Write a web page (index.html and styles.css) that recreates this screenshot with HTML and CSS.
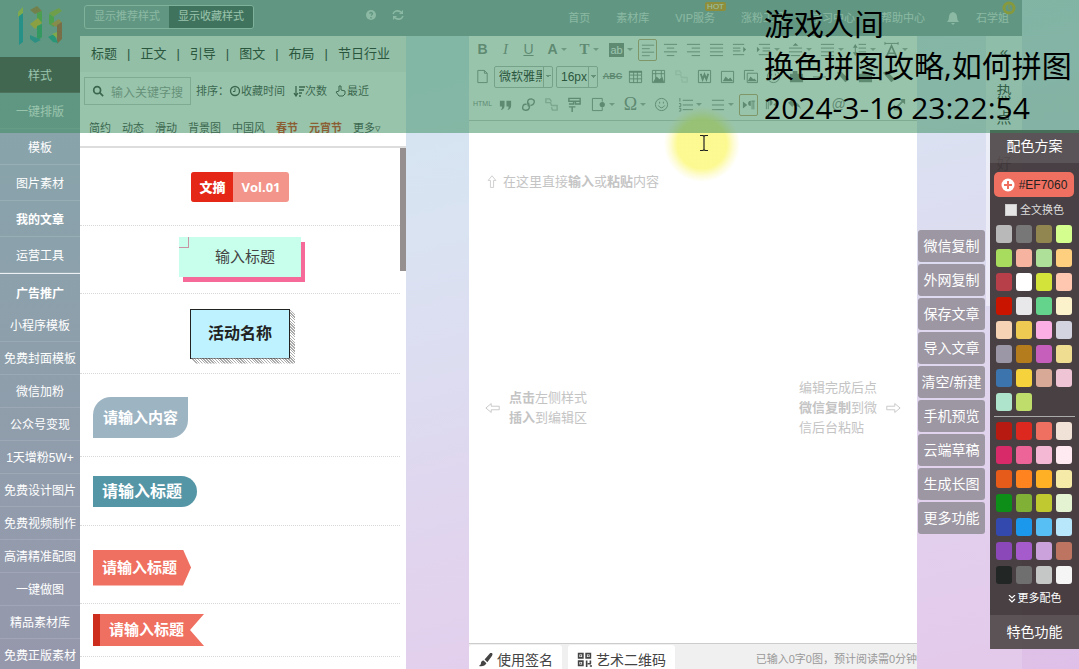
FILE: index.html
```html
<!DOCTYPE html>
<html lang="zh-CN">
<head>
<meta charset="utf-8">
<meta name="viewport" content="width=device-width, initial-scale=1">
<title>135编辑器</title>
<link rel="stylesheet" href="styles.css">
</head>
<body>
<svg class="defs" aria-hidden="true">
  <symbol id="left" viewBox="0 0 16 16"><path d="M1 2.500h14M1 6.500h9M1 10.500h14M1 14.500h9"/></symbol>
  <symbol id="center" viewBox="0 0 16 16"><path d="M1 2.500h14M4 6.500h8M1 10.500h14M4 14.500h8"/></symbol>
  <symbol id="right" viewBox="0 0 16 16"><path d="M1 2.500h14M6 6.500h9M1 10.500h14M6 14.500h9"/></symbol>
  <symbol id="justify" viewBox="0 0 16 16"><path d="M1 2.500h14M1 6.500h14M1 10.500h14M1 14.500h14"/></symbol>
  <symbol id="indent" viewBox="0 0 16 16"><path d="M1 2.500h12M1 6.500h8M1 9.500h8M1 13.500h12"/><path class="solid" d="M12 5l3 3-3 3z"/></symbol>
  <symbol id="outdent" viewBox="0 0 16 16"><path d="M3 2.500h12M7 6.500h8M7 9.500h8M3 13.500h12"/><path class="solid" d="M1 5l3 3-3 3z"/></symbol>
  <symbol id="space" viewBox="0 0 16 16"><path d="M1 6.500h14M1 10.500h14M3 14.500h10"/><path class="solid" d="M5 4l3-3 3 3z"/></symbol>
  <symbol id="lineh" viewBox="0 0 16 16"><path d="M7 2.500h8M7 6.500h8M7 10.500h8M7 14.500h8M3.500 4v9"/><path class="solid" d="M1 6l2.500-4L6 6zM1 11l2.500 4L6 11z"/></symbol>
  <symbol id="spacing" viewBox="0 0 16 16"><path d="M1 1.500h14M1 0v3M15 0v3"/><path stroke-width="1.800" d="M3 15L8 4l5 11M5 12h6"/></symbol>
  <symbol id="page" viewBox="0 0 16 16"><path d="M3 1.500h7l3 3v10H3zM10 1.500v3h3"/></symbol>
  <symbol id="table" viewBox="0 0 16 16"><path d="M1.500 2.500h13v12h-13zM1.500 6.500h13M1.500 10.500h13M6 3v12M10 3v12"/><path class="solid" d="M1 2h14v2H1z"/></symbol>
  <symbol id="image" viewBox="0 0 16 16"><path d="M1.500 2.500h13v12h-13z"/><path class="solid" d="M3 13l3-5 3 3 2-2 3 4z"/></symbol>
  <symbol id="grid" viewBox="0 0 16 16"><path d="M1.500 1.500h13v13h-13zM2 5h12M5 2v12M11 2v7"/><path class="solid" d="M2 14l4-6 3 3 3-3 2 6z"/></symbol>
  <symbol id="images" viewBox="0 0 16 16"><path d="M1.500 11.500v-10h10M4.500 4.500h11v10h-11z"/><path class="solid" d="M5 13l3-5 3 3 1-1 3 3z"/></symbol>
  <symbol id="word" viewBox="0 0 16 16"><path d="M1.500 1.500h13v13h-13z"/><path stroke-width="2" d="M4 5l2 6 2-5 2 5 2-6"/></symbol>
  <symbol id="quote" viewBox="0 0 16 16"><path class="solid" d="M2 4h5v5q0 4-4 5 2-3 1-4H2zM9 4h5v5q0 4-4 5 2-3 1-4H9z"/></symbol>
  <symbol id="link" viewBox="0 0 16 16"><path stroke-width="1.500" d="M8 10L7 6q0-4 4-4 4 1 3 4-1 3-4 3M8 6l1 5q-1 4-5 3-3-1-2-4 1-3 4-2"/></symbol>
  <symbol id="unlink" viewBox="0 0 16 16"><path stroke-width="1.500" d="M8 5L6 2H2v4h5l1 3h6v5H9l-1-3"/></symbol>
  <symbol id="brush" viewBox="0 0 16 16"><path stroke-width="1.500" d="M2 1.500h12v3H2zM2 7.500h5V5M9 5v2.500h5V5M2 10.500h7M5.500 11v5"/></symbol>
  <symbol id="insert" viewBox="0 0 16 16"><path d="M12 5V1.500H1.500v13H12V11"/><circle class="solid" cx="12" cy="8" r="2.800"/></symbol>
  <symbol id="smile" viewBox="0 0 16 16"><circle cx="8" cy="8" r="6.500"/><path d="M4.500 9q3.500 5 7 0M6 5v2M10 5v2"/></symbol>
  <symbol id="ol" viewBox="0 0 16 16"><path d="M5 3.500h11M5 8.500h11M5 13.500h11M2 1v4M1 7h2v3H1M1 12h2v3H1"/></symbol>
  <symbol id="ul" viewBox="0 0 16 16"><path d="M2 3.500h13M2 8.500h13M2 13.500h13"/></symbol>
  <symbol id="para" viewBox="0 0 16 16"><path class="solid" d="M1 4l5 4-5 4zM11 3h4v1H11zM10 3v6a3 3 0 0 1 0-6z"/><path d="M11.500 3v10M13.500 3v10"/></symbol>
  <symbol id="undo" viewBox="0 0 16 16"><path class="solid" d="M1 6l5-4v3q7 0 9 8-3-4-9-4v2z"/></symbol>
  <symbol id="expand" viewBox="0 0 16 16"><path d="M3 13L13 3" stroke-width="2"/><path class="solid" d="M8 2h6v6zM2 8v6h6z"/></symbol>
  <symbol id="eraser" viewBox="0 0 16 16"><path class="solid" d="M2 4l4-2 9 9-4 3z"/></symbol>
  <symbol id="camera" viewBox="0 0 16 16"><path class="solid" d="M1 5h14v9H1zM4 2h5v3H4z"/></symbol>
  <symbol id="dash" viewBox="0 0 16 16"><path d="M1 8.500h14"/></symbol>
  <symbol id="arrow" viewBox="0 0 18 14"><path d="M1 7l6-5v3h9v4H7v3z"/></symbol>
</svg>

<div class="app">
  <aside class="side">
    <a class="logo" href="#" aria-label="135">
      <svg viewBox="0 0 48 40"><path fill="#1798b4" d="M3 9l4-2v29l-4 3z"/><path fill="#c9c93e" d="M2 6l5-5v6l-5 4z"/><path fill="#b0793c" d="M14 4l7-4 5 5-7 3z"/><path fill="#66b447" d="M21 7l5-2v12l-5 3z"/><path fill="#e1b72d" d="M14 18l8-6 4 5-7 6z"/><path fill="#35a867" d="M21 20l5-2v13l-5 4z"/><path fill="#2697ac" d="M14 29l7 3 4 2-6 3-5-4z"/><path fill="#aab23c" d="M33 7l10-5 3 3-9 6z"/><path fill="#67b842" d="M33 8l5 3v10l-5-3z"/><path fill="#d8913b" d="M35 18l8-5 3 4-6 4z"/><path fill="#bd5438" d="M41 19l5-3v17l-5 5z"/><path fill="#20a396" d="M32 31l6-3 4 9-5-1z"/><path fill="#c9c93e" d="M36 28l5-2v6z"/></svg>
    </a>
    <nav class="menu">
      <a class="on" href="#">样式</a><a href="#">一键排版</a><a href="#">模板</a><a href="#">图片素材</a><a class="strong" href="#">我的文章</a><a href="#">运营工具</a>
    </nav>
    <nav class="menu promo">
      <a class="strong" href="#">广告推广</a><a href="#">小程序模板</a><a href="#">免费封面模板</a><a href="#">微信加粉</a><a href="#">公众号变现</a><a href="#">1天增粉5W+</a><a href="#">免费设计图片</a><a href="#">免费视频制作</a><a href="#">高清精准配图</a><a href="#">一键做图</a><a href="#">精品素材库</a><a href="#">免费正版素材</a>
    </nav>
  </aside>

  <div class="work">
    <header class="top">
      <div class="toggle"><button>显示推荐样式</button><button class="on">显示收藏样式</button></div>
      <div class="tools">
        <button aria-label="帮助"><svg viewBox="0 0 12 12"><circle cx="6" cy="6" r="5" fill="currentColor"/><path d="M4.500 4.500q1.500-2 3 0 0 1-1.500 2M6 8v1.500" fill="none" stroke="#8da3ab" stroke-width="1.300"/></svg></button>
        <button aria-label="刷新"><svg viewBox="0 0 12 12"><path d="M1 5q2-5 8-2M11 7q-2 5-8 2" fill="none" stroke="currentColor" stroke-width="1.600"/><path d="M11 1v4H7zM1 11V7h4z" fill="currentColor"/></svg></button>
      </div>
      <nav class="nav">
        <a href="#">首页</a><a href="#">素材库</a><a class="vip" href="#">VIP服务<span class="hot">HOT</span></a><a href="#">涨粉工具</a><a href="#">学习中心</a><a href="#">帮助中心</a>
        <a class="bell" href="#" aria-label="消息"><svg viewBox="0 0 12 14"><path fill="currentColor" d="M6 1q4 1 4 5 0 3 2 5H0q2-2 2-5 0-4 4-5zM4 12h4l-2 2z"/></svg></a>
        <a class="user" href="#">石学姐<svg class="medal" viewBox="0 0 14 16"><circle cx="7" cy="8" r="5" fill="none" stroke="#dba820" stroke-width="3"/><path d="M7 5v4h2" fill="none" stroke="#dba820"/></svg></a>
      </nav>
    </header>

    <div class="cols">
      <section class="library">
        <nav class="cats"><a href="#">标题</a><i>|</i><a href="#">正文</a><i>|</i><a href="#">引导</a><i>|</i><a href="#">图文</a><i>|</i><a href="#">布局</a><i>|</i><a href="#">节日行业</a></nav>
        <div class="filter">
          <label class="search"><svg viewBox="0 0 14 14"><circle cx="6" cy="6" r="4" fill="none" stroke="currentColor" stroke-width="2"/><path d="M9 9l4 4" stroke="currentColor" stroke-width="2"/></svg><input type="text" aria-label="搜索" placeholder="输入关键字搜索"></label>
          <span>排序：</span>
          <a href="#"><svg viewBox="0 0 12 12"><circle cx="6" cy="6" r="4.500" fill="none" stroke="currentColor" stroke-width="1.300"/><path d="M6 3v3.500H4" fill="none" stroke="currentColor"/></svg>收藏时间</a>
          <a class="next" href="#"><svg viewBox="0 0 12 12"><path d="M3 1v9M1 8l2 3 2-3M6 2h6M6 5h5M6 8h3M6 11h2" fill="none" stroke="currentColor" stroke-width="1.300"/></svg>次数</a>
          <a class="next" href="#"><svg viewBox="0 0 12 12"><path d="M4 6V1h2v4l4 1v3l-2 2H4L1 7z" fill="none" stroke="currentColor"/></svg>最近</a>
        </div>
        <nav class="tags"><a href="#">简约</a><a href="#">动态</a><a href="#">滑动</a><a href="#">背景图</a><a href="#">中国风</a><a class="festive" href="#">春节</a><a class="festive" href="#">元宵节</a><a href="#">更多▿</a></nav>
        <div class="list">
          <ul class="styles">
            <li class="mid h78"><div class="vol"><b>文摘</b><span>Vol.01</span></div></li>
            <li class="mid h68"><div class="mint">输入标题</div></li>
            <li class="mid h79"><div class="boxed">活动名称</div></li>
            <li class="h83"><div class="leaf">请输入内容</div></li>
            <li class="h69"><div class="pill">请输入标题</div></li>
            <li class="h78"><div class="tagshape">请输入标题</div></li>
            <li class="h53"><div class="ribbon">请输入标题</div></li>
          </ul>
          <div class="bar"></div>
        </div>
      </section>

      <main class="editor">
        <div class="toolbar">
          <div class="row">
            <button class="b">B</button><button class="i">I</button><button class="u">U</button><button class="b drop">A</button><button class="t drop">T</button><button class="ab drop"><span>ab</span></button>
            <button class="sel" aria-label="左对齐"><svg><use href="#left"/></svg></button><button aria-label="居中"><svg><use href="#center"/></svg></button><button aria-label="右对齐"><svg><use href="#right"/></svg></button><button aria-label="两端对齐"><svg><use href="#justify"/></svg></button><button aria-label="缩进"><svg><use href="#indent"/></svg></button><button class="drop" aria-label="边距"><svg><use href="#outdent"/></svg></button><button class="drop" aria-label="段前距"><svg><use href="#space"/></svg></button><button class="drop" aria-label="段后距"><svg><use href="#justify"/></svg></button><button class="drop" aria-label="行高"><svg><use href="#lineh"/></svg></button><button class="drop" aria-label="字间距"><svg><use href="#spacing"/></svg></button>
          </div>
          <div class="row">
            <button aria-label="新建"><svg><use href="#page"/></svg></button>
            <select class="font" aria-label="字体"><option>微软雅黑</option></select><select class="size" aria-label="字号"><option>16px</option></select>
            <button class="abc">ABC</button><button aria-label="表格"><svg><use href="#table"/></svg></button><button aria-label="背景"><svg><use href="#grid"/></svg></button><button class="dim" aria-label="合并"><svg><use href="#unlink"/></svg></button><button aria-label="Word"><svg><use href="#word"/></svg></button><button aria-label="图片"><svg><use href="#image"/></svg></button><button aria-label="多图"><svg><use href="#images"/></svg></button><button aria-label="音乐"><svg><use href="#smile"/></svg></button><button aria-label="视频"><svg><use href="#camera"/></svg></button><button aria-label="分隔线"><svg><use href="#dash"/></svg></button><button aria-label="清除"><svg><use href="#eraser"/></svg></button><button aria-label="截图"><svg><use href="#camera"/></svg></button><button aria-label="格式"><svg><use href="#eraser"/></svg></button>
          </div>
          <div class="row">
            <button class="html">HTML</button><button aria-label="引用"><svg><use href="#quote"/></svg></button><button aria-label="链接"><svg><use href="#link"/></svg></button><button class="faded" aria-label="取消链接"><svg><use href="#unlink"/></svg></button><button aria-label="格式刷"><svg><use href="#brush"/></svg></button><button class="drop" aria-label="插入"><svg><use href="#insert"/></svg></button><button class="omega drop">Ω</button><button aria-label="表情"><svg><use href="#smile"/></svg></button><button class="drop" aria-label="有序列表"><svg><use href="#ol"/></svg></button><button class="drop" aria-label="无序列表"><svg><use href="#ul"/></svg></button><button class="sel" aria-label="段落"><svg><use href="#para"/></svg></button><button aria-label="段落反向"><svg class="flip"><use href="#para"/></svg></button><button aria-label="撤销"><svg><use href="#undo"/></svg></button><button class="at">@</button><button class="last" aria-label="全屏"><svg><use href="#expand"/></svg></button>
          </div>
        </div>
        <div class="canvas">
          <p class="hint first"><svg class="up"><use href="#arrow"/></svg><span>在这里直接<b>输入</b>或<b>粘贴</b>内容</span></p>
          <div class="sides">
            <p class="hint"><svg><use href="#arrow"/></svg><span><b>点击</b>左侧样式<br><b>插入</b>到编辑区</span></p>
            <p class="hint"><span>编辑完成后点<br><b>微信复制</b>到微<br>信后台粘贴</span><svg class="flip"><use href="#arrow"/></svg></p>
          </div>
        </div>
        <footer class="foot">
          <button><svg viewBox="0 0 16 16"><path fill="currentColor" d="M15 1q1 1 0 3l-5 7-3-3 6-7zM6 9l3 3q-2 4-8 3l2-2q0-4 3-4z"/></svg>使用签名</button>
          <button><svg viewBox="0 0 14 14"><path fill="none" stroke="currentColor" stroke-width="1.500" d="M1.500 1.500h4v4h-4zM8.500 1.500h4v4h-4zM1.500 8.500h4v4h-4zM9 8v6M12.500 8v3M10 11h3M12 13h2M3 3.500h1M10 3.500h1M3 10.500h1"/></svg>艺术二维码</button>
          <span>已输入0字0图，预计阅读需0分钟</span>
        </footer>
      </main>

      <div class="actions">
        <button>微信复制</button><button>外网复制</button><button>保存文章</button><button>导入文章</button><button>清空/新建</button><button>手机预览</button><button>云端草稿</button><button>生成长图</button><button>更多功能</button>
      </div>
      <div class="strip"><span>«</span><span>热</span><span>点</span><span class="low">好</span></div>
    </div>
  </div>

  <aside class="palette">
    <h2>配色方案</h2>
    <button class="current"><svg viewBox="0 0 14 14"><circle cx="7" cy="7" r="6.500" fill="#fff"/><path d="M7 3v8M3 7h8" stroke="#ef7060" stroke-width="2"/></svg>#EF7060</button>
    <label class="whole"><input type="checkbox">全文换色</label>
    <div class="swatches" id="recent"></div>
    <div class="swatches basic" id="basic"></div>
    <button class="more"><svg viewBox="0 0 8 8"><path d="M1 0l3 3 3-3M1 4l3 3 3-3" fill="none" stroke="currentColor" stroke-width="1.200"/></svg>更多配色</button>
    <button class="special">特色功能</button>
  </aside>

  <div class="glow"></div>
  <div class="caption"><p>游戏人间</p><p>换色拼图攻略,如何拼图</p><p>2024-3-16 23:22:54</p></div>
  <svg class="cursor" viewBox="0 0 8 18"><path d="M0 1.500h3l1 1 1-1h3M0 16.500h3l1-1 1 1h3M4 2v14" fill="none" stroke="#222" stroke-width="1.200"/></svg>
</div>
<script src="app.js"></script>
</body>
</html>
```
FILE: app.js
```js
const palettes = {
  recent: 'b9b9b9 777777 918550 d4ff8f a8dc5e f5b3a0 aee09a ffcf80 b63f49 ffffff d3e339 ffc6b0 c91400 e8e8ea 64d48c fbf2cc f7d3b5 efca52 fbaee4 d2d3de 9c97a6 b47c1c c55fbb efdd92 3c74ad f6d33c d9a997 efc4d4 aee4cb bfdd6b',
  basic: 'b61a10 dc281e ef7060 f0e2d6 d82a68 ed6499 f4b8d4 feeaf0 e65a1a ff8420 ffb025 f6eaa8 0c8e18 80b136 c0ca30 e4f3d2 3349ae 1b98ec 58bff4 b8e6fa 8b48b8 a65bcc cba2dc bd7562 222625 6f6f6f c5c7c6 f5f5f5'
};
for (const [id, colors] of Object.entries(palettes)) {
  const box = document.getElementById(id);
  for (const c of colors.split(' ')) {
    const b = document.createElement('button');
    b.style.background = '#' + c;
    b.setAttribute('aria-label', '#' + c);
    box.append(b);
  }
}
```
FILE: styles.css
```css
* { box-sizing: border-box; }
body {
  margin: 0;
  font: 12px/1.5 "Liberation Sans", "Noto Sans CJK SC", sans-serif;
  color: #444;
  background: linear-gradient(165deg, #c2e2ec, #d3dff0 35%, #dccdec 70%, #dfbfe7);
}
a { color: inherit; text-decoration: none; }
button { font: inherit; color: inherit; border: 0; padding: 0; margin: 0; background: none; }
p, h2, ul { margin: 0; padding: 0; }
.defs { position: absolute; width: 0; height: 0; }
.app { position: relative; display: flex; height: 100vh; overflow: hidden; }

/* sidebar */
.side { flex: none; width: 80px; overflow: hidden; background: linear-gradient(#8da5ab, #89a3ab 25%, #9698ac); }
.logo { display: flex; justify-content: center; height: 57px; padding-top: 6px; }
.logo svg { width: 48px; height: 40px; }
.menu { display: flex; flex-direction: column; border-bottom: 1px solid #eef1f3; }
.menu a { display: flex; align-items: center; justify-content: center; height: 36px; padding-top: 2px; color: #fff; white-space: nowrap; border-bottom: 1px solid rgba(255,255,255,.12); }
.menu a.on { background: #4f4547; }
.menu .strong { font-weight: bold; }
.promo { border: 0; }
.promo a { flex: none; height: 33px; }
.promo .strong { height: 35px; padding-top: 5px; border: 0; }

/* header */
.work { flex: 1; min-width: 0; display: flex; flex-direction: column; margin-right: 57px; background: rgba(255,255,255,.15); }
.top { flex: none; display: flex; align-items: center; height: 36px; padding: 0 13px 0 4px; color: #e2e8ec; background: #8da3ab; }
.toggle { display: flex; margin-bottom: 3px; border: 1px solid #ccd8dc; border-radius: 3px; overflow: hidden; }
.toggle button { width: 84px; height: 22px; font-size: 11px; }
.toggle .on { color: #fff; background: #4b5c60; }
.tools { display: flex; gap: 15px; margin: 0 0 6px 111px; }
.tools svg { display: block; width: 12px; height: 12px; }
.nav { flex: 1; display: flex; justify-content: flex-end; align-items: center; gap: 26px; font-size: 11px; white-space: nowrap; }
.vip, .user { position: relative; }
.hot { position: absolute; right: -11px; top: -8px; padding: 0 2px; font-size: 8px; line-height: 9px; color: #fff; background: #e9931d; border-radius: 2px; }
.bell { display: flex; margin-left: -4px; }
.bell svg { width: 12px; height: 14px; }
.user { margin-left: -9px; }
.medal { position: absolute; right: -7px; top: -10px; width: 14px; height: 16px; }

.cols { flex: 1; display: flex; min-height: 0; }

/* style library */
.library { flex: none; width: 326px; margin-right: 63px; display: flex; flex-direction: column; background: #fff; }
.cats { display: flex; align-items: center; justify-content: space-between; height: 36px; padding: 0 16px 0 11px; font-size: 13px; color: #222; background: #f3f4f4; }
.cats i { font-style: normal; }
.filter { display: flex; align-items: center; height: 38px; padding-left: 4px; font-size: 11px; white-space: nowrap; }
.filter a, .search { display: flex; align-items: center; }
.filter svg { flex: none; width: 12px; height: 12px; }
.filter .next { margin-left: 8px; }
.search { width: 107px; height: 28px; margin-right: 5px; padding: 0 7px; gap: 7px; border: 1px solid #ccc; }
.search input { width: 100%; min-width: 0; padding: 0; border: 0; outline: 0; background: none; font: 12px "Noto Sans CJK SC", sans-serif; }
.search input::placeholder { color: #999; }
.tags { display: flex; gap: 11px; align-items: center; height: 38px; padding: 0 9px; border-bottom: 2px solid #ddd; font-size: 11px; white-space: nowrap; }
.tags .festive { color: #e2350c; font-weight: bold; }
.list { flex: 1; min-height: 0; display: flex; overflow: hidden; }
.styles { flex: 1; list-style: none; isolation: isolate; }
.styles li { display: flex; align-items: center; padding-left: 13px; border-bottom: 1px dotted #d8d8d8; }
.styles .mid { justify-content: center; padding: 0; }
.h53 { height: 53px; }
.h68 { height: 68px; }
.h69 { height: 69px; }
.h78 { height: 78px; }
.h79 { height: 80px; }
.h83 { height: 83px; }
.bar { width: 6px; height: 123px; background: #958f90; }
.vol { display: flex; height: 30px; border-radius: 3px; overflow: hidden; line-height: 30px; font-size: 13px; font-weight: bold; font-family: "Open Sans", "Noto Sans CJK SC", sans-serif; color: #fff; background: #f3958b; }
.vol b { padding: 0 8px; background: #e52718; }
.vol span { padding: 0 8px; }
.mint { position: relative; width: 122px; height: 40px; margin-bottom: 6px; padding-left: 10px; font-size: 15px; line-height: 40px; text-align: center; background: #c7ffec; box-shadow: 4px 5px #f56a99; }
.mint::before { content: ""; position: absolute; left: 0; top: 0; width: 9px; height: 10px; border: solid #c893a5; border-width: 0 1px 1px 0; }
.boxed { position: relative; width: 100px; height: 50px; line-height: 48px; text-align: center; font-size: 16px; font-weight: bold; color: #222; background: #bdf2fe; border: 1px solid #222; }
.boxed::after { content: ""; position: absolute; inset: 0 -6px -6px 0; background: repeating-linear-gradient(45deg, #aaa 0 1px, #fff 1px 2px); clip-path: polygon(0 calc(100% - 5px), 5px 100%, 100% 100%, 100% 5px, calc(100% - 5px) 0, calc(100% - 5px) calc(100% - 5px)); }
.leaf, .pill, .tagshape, .ribbon { color: #fff; font-size: 15px; font-weight: bold; }
.leaf { padding: 0 10px; line-height: 41px; margin-top: 4px; background: #9db4c3; border-radius: 18px 0; }
.pill { padding: 0 15px 0 9px; font-size: 16px; line-height: 31px; background: #5596a6; border-radius: 0 16px 16px 0; }
.tagshape { padding: 0 14px 0 9px; line-height: 36px; margin-top: 6px; background: #ef7060; clip-path: polygon(0 0, 90px 0, 100% 50%, 90px 100%, 0 100%); }
.ribbon { padding: 0 20px 0 9px; line-height: 32px; background: #ef7060; border-left: 7px solid #cc2d1d; clip-path: polygon(0 0, 100% 0, calc(100% - 14px) 50%, 100% 100%, 0 100%); }

/* editor */
.editor { flex: 1; min-width: 0; display: flex; flex-direction: column; background: #fff; }
.toolbar { flex: none; height: 85px; overflow: hidden; border-bottom: 1px solid #ccc; color: #8a8a8a; }
.row { display: flex; align-items: center; height: 27px; padding-left: 2px; }
.row:last-child { height: 29px; }
.row button { flex: none; display: flex; align-items: center; justify-content: center; width: 23px; height: 22px; font-size: 14px; }
.row svg { width: 15px; height: 15px; fill: none; stroke: currentColor; }
.solid { fill: currentColor; stroke: none; }
.row .drop { width: 32px; padding-left: 2px; gap: 3px; }
.row .drop::after { content: ""; width: 0; height: 0; border: 3px solid transparent; border-top-color: #aaa; margin-top: 3px; }
.b { font-weight: bold; }
.row .i { font: italic 15px "Liberation Serif", serif; }
.u { text-decoration: underline; }
.row .t { font: bold 15px "Liberation Serif", serif; }
.ab span { padding: 0 1px; font-size: 11px; line-height: 14px; color: #fff; background: #8a8a8a; }
.row .sel { width: 19px; margin: 0 2px; border: 1px solid #c9a377; border-radius: 2px; }
.row .sel svg { width: 14px; height: 14px; }
.row select { height: 22px; margin-right: 3px; padding: 0 10px 0 4px; border: 1px solid #bbb; border-radius: 2px; appearance: none; color: #222; font: 12px "Liberation Sans", "Noto Sans CJK SC", sans-serif; background: linear-gradient(#bbb, #bbb) right 8px top / 1px 100% no-repeat, conic-gradient(from -45deg at 50% 100%, #999 90deg, transparent 0) right 1px center / 6px 3px no-repeat; }
.row .font { width: 59px; }
.row .size { width: 42px; }
.row .abc { font-size: 9px; font-weight: bold; text-decoration: line-through; }
.row .html { font-size: 7px; }
.row .omega { font: 18px "Liberation Serif", serif; }
.row .at { margin-left: 21px; }
.row .last { margin-left: 38px; }
.dim { opacity: .2; }
.faded { opacity: .5; }
.flip { transform: scaleX(-1); }
.canvas { flex: 1; display: flex; flex-direction: column; padding: 51px 16px 0; color: #c4c4c4; }
.hint { display: flex; align-items: center; gap: 8px; font-size: 13px; line-height: 20px; }
.hint svg { width: 16px; height: 14px; fill: none; stroke: currentColor; }
.hint.first { gap: 4px; }
.hint .up { transform: rotate(90deg); width: 14px; }
.sides { display: flex; justify-content: space-between; align-items: center; margin-top: 186px; }
.foot { flex: none; display: flex; align-items: flex-end; gap: 6px; height: 26px; background: #f0f0f0; border-top: 1px solid #ccc; }
.foot button { display: flex; align-items: center; gap: 4px; height: 24px; padding: 5px 9px 0; font-size: 14px; line-height: 18px; background: #fff; border-radius: 3px 3px 0 0; white-space: nowrap; }
.foot svg { width: 15px; height: 15px; }
.foot span { margin-left: auto; font-size: 11px; line-height: 20px; color: #999; white-space: nowrap; }

/* side actions */
.actions { flex: none; width: 69px; padding: 194px 1px 0; display: flex; flex-direction: column; gap: 2px; }
.actions button { height: 32px; font-size: 14px; color: #fff; background: #9d97a3; border-radius: 3px; white-space: nowrap; }
.strip { flex: none; width: 36px; height: 270px; padding-top: 3px; display: flex; flex-direction: column; align-items: center; background: rgba(255,255,255,.45); font-size: 15px; line-height: 26px; color: #333; }
.strip span:first-child { margin-bottom: 14px; }
.strip .low { margin-top: 20px; }

/* colour palette */
.palette { position: absolute; right: 0; top: 130px; width: 89px; display: flex; flex-direction: column; background: rgba(64,56,58,.95); color: #fff; }
.palette h2 { font-size: 14px; font-weight: normal; line-height: 33px; text-align: center; background: rgba(255,255,255,.1); }
.palette .current { display: flex; align-items: center; justify-content: center; gap: 4px; height: 25px; margin: 9px 5px 0 4px; color: #222; background: #ef7060; border-radius: 5px; }
.current svg { width: 14px; height: 14px; }
.whole { display: flex; align-items: center; gap: 3px; height: 26px; padding-left: 15px; font-size: 11px; color: #ddd; }
.whole input { width: 12px; height: 12px; margin: 0; appearance: none; background: #e5e5e5; border: 1px solid #ccc; }
.swatches { display: grid; grid-template-columns: repeat(4, 16px); gap: 6px 4px; padding: 2px 6px 5px; }
.swatches button { height: 18px; border-radius: 3px; }
.basic { margin: 0 4px; padding: 5px 2px 2px; border-top: 1px solid #aaa; }
.more { display: flex; align-items: center; justify-content: center; gap: 2px; height: 29px; padding-bottom: 4px; font-size: 11px; }
.more svg { width: 8px; height: 8px; }
.palette .special { height: 34px; font-size: 14px; background: rgba(255,255,255,.1); }

/* caption over the recording */
.caption { position: absolute; left: 0; right: 0; top: 0; height: 133px; padding: 3px 0 0 764px; color: #000; background: rgba(51,137,89,.5); font: 30px/42px "Open Sans", "Noto Sans CJK SC", sans-serif; white-space: nowrap; pointer-events: none; }
.glow { position: absolute; left: 664px; top: 106px; width: 76px; height: 76px; border-radius: 50%; background: radial-gradient(closest-side, rgba(252,249,140,.95) 65%, rgba(252,249,180,.5) 85%, rgba(255,255,220,0)); }
.cursor { position: absolute; left: 700px; top: 134px; width: 8px; height: 18px; }
```
